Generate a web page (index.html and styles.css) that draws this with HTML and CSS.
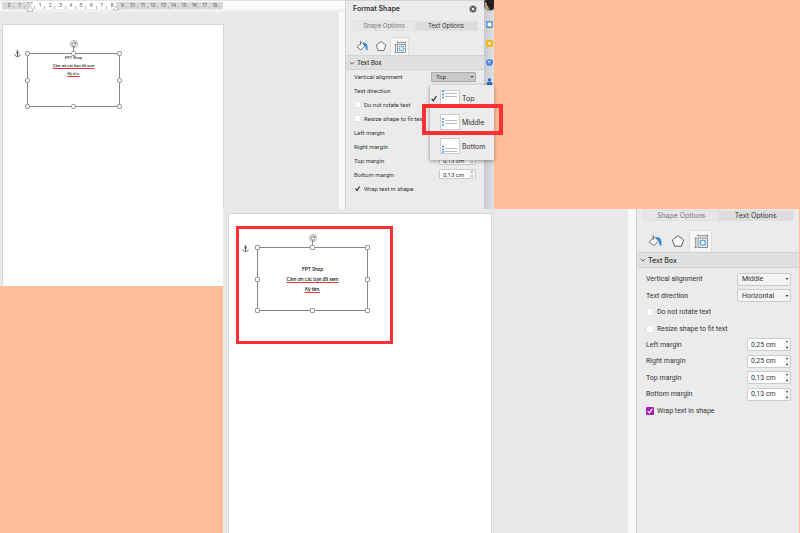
FILE: index.html
```html
<!DOCTYPE html>
<html lang="vi">
<head>
<meta charset="utf-8">
<title>Format Shape</title>
<link rel="stylesheet" href="styles.css">
</head>
<body>
<svg class="defs" aria-hidden="true">
  <symbol id="i-fill" viewBox="0 0 24 24">
    <path d="M9 2v8M2 14 11 5l7 7-8 8z" fill="#fafafa" stroke="#555" stroke-width="1.500" stroke-linejoin="round"/>
    <path d="M14 5c5 0 9 3 9 8v8c-3-1-4-4-4-8l-5-6z" fill="#2f86c9"/>
  </symbol>
  <symbol id="i-pentagon" viewBox="0 0 24 24">
    <path d="M12 3 21.500 10 18 21H6L2.500 10z" fill="#fafafa" stroke="#555" stroke-width="1.600" stroke-linejoin="round"/>
  </symbol>
  <symbol id="i-layout" viewBox="0 0 24 24">
    <path d="M7 7h16v16H7z" fill="#fff" stroke="#666" stroke-width="1.400"/>
    <path d="M3 7v16M1 7h4M1 23h4M7 3h16M7 1v4M23 1v4" fill="none" stroke="#666" stroke-width="1.400"/>
    <path d="M10 10l3 3M20 10l-3 3M10 20l3-3M20 20l-3-3" stroke="#2f8fdc" stroke-width="2"/>
    <path d="m12.500 11.500 2.500-3 2.500 3zM12.500 18.500l2.500 3 2.500-3zM11.500 12.500l-3 2.500 3 2.500zM18.500 12.500l3 2.500-3 2.500z" fill="#2f8fdc"/>
  </symbol>
  <symbol id="i-chevron" viewBox="0 0 8 8">
    <path d="m1 2.500 3 3 3-3" fill="none" stroke="#555" stroke-width="1.200"/>
  </symbol>
  <symbol id="i-steps" viewBox="0 0 6 12">
    <path d="m1.700 3.500 1.300-2 1.300 2zM1.700 8.500 3 10.500l1.300-2z" fill="#333"/>
  </symbol>
  <symbol id="i-anchor" viewBox="0 0 12 12">
    <circle cx="6" cy="2" r="1.200" fill="none" stroke="#333"/>
    <path d="M6 3v8M3.500 5h5M1 7.500C1.500 10 4 11 6 11s4.500-1 5-3.500" fill="none" stroke="#333" stroke-width="1.300"/>
  </symbol>
  <symbol id="i-rotate" viewBox="0 0 12 12">
    <circle cx="6" cy="6" r="5.300" fill="#fff" stroke="#888"/>
    <path d="M8.500 5A2.800 2.800 0 1 0 8.500 7.500M8.800 3v2.500H6.300" fill="none" stroke="#555" stroke-width="1.100"/>
  </symbol>
  <symbol id="i-check" viewBox="0 0 12 12">
    <path d="m2 6.500 3 3.500 5-8" fill="none" stroke="#222" stroke-width="2"/>
  </symbol>
</svg>

<main class="collage">
  <section class="shot shot-before">
    <div class="editor">
      <div class="ruler-bar">
        <div class="ruler">
          <span>2</span><span>1</span><span></span><span>1</span><span>2</span><span>3</span><span>4</span><span>5</span><span>6</span><span>7</span><span>8</span><span>9</span><span>10</span><span>11</span><span>12</span><span>13</span><span>14</span><span>15</span><span>16</span><span>17</span><span>18</span>
          <svg class="indent indent-left" viewBox="0 0 6 10"><path d="M.5.500h5L3 3.500zM.5 7 3 4l2.500 3v2.500h-5z" fill="#fff" stroke="#999" stroke-width=".7"/></svg>
          <svg class="indent indent-right" viewBox="0 0 6 10"><path d="M.5 8V7L3 4l2.500 3v1z" fill="#fff" stroke="#999" stroke-width=".7"/></svg>
        </div>
      </div>
      <div class="workspace">
        <div class="sheet">
          <svg class="anchor"><use href="#i-anchor"/></svg>
          <div class="textbox">
            <svg class="rotate"><use href="#i-rotate"/></svg>
            <i class="h nw"></i><i class="h n"></i><i class="h ne"></i><i class="h w"></i><i class="h e"></i><i class="h sw"></i><i class="h s"></i><i class="h se"></i>
            <p>FPT Shop</p>
            <p><u>Cảm ơn các bạn đã xem</u></p>
            <p><u>Ký tên.</u></p>
          </div>
        </div>
        <div class="scroll"></div>
      </div>
    </div>

    <aside class="panel">
      <header class="panel-title">
        <h2>Format Shape</h2>
        <button class="close" aria-label="Close"><svg viewBox="0 0 8 8"><circle cx="4" cy="4" r="3.500" fill="#666"/><path d="m2.700 2.700 2.600 2.600M5.300 2.700 2.700 5.300" stroke="#fff" stroke-width=".9"/></svg></button>
      </header>
      <div class="segments"><button>Shape Options</button><button class="on">Text Options</button></div>
      <div class="tabs">
        <button aria-label="Text fill"><svg><use href="#i-fill"/></svg></button>
        <button aria-label="Text effects"><svg><use href="#i-pentagon"/></svg></button>
        <button class="on" aria-label="Text box"><svg><use href="#i-layout"/></svg></button>
      </div>
      <h3 class="group"><svg><use href="#i-chevron"/></svg>Text Box</h3>
      <form class="fields">
        <div class="row"><label for="a-va">Vertical alignment</label><select id="a-va" class="pressed"><option>Top</option></select></div>
        <div class="row"><label for="a-td">Text direction</label><select id="a-td"><option>Horizontal</option></select></div>
        <label class="tick"><input type="checkbox">Do not rotate text</label>
        <label class="tick"><input type="checkbox">Resize shape to fit text</label>
        <div class="row"><label for="a-l">Left margin</label><span class="spin"><input id="a-l" value="0,25 cm"><svg><use href="#i-steps"/></svg></span></div>
        <div class="row"><label for="a-r">Right margin</label><span class="spin"><input id="a-r" value="0,25 cm"><svg><use href="#i-steps"/></svg></span></div>
        <div class="row"><label for="a-t">Top margin</label><span class="spin"><input id="a-t" value="0,13 cm"><svg><use href="#i-steps"/></svg></span></div>
        <div class="row"><label for="a-b">Bottom margin</label><span class="spin"><input id="a-b" value="0,13 cm"><svg><use href="#i-steps"/></svg></span></div>
        <label class="tick"><input type="checkbox" checked>Wrap text in shape</label>
      </form>
    </aside>

    <nav class="apps">
      <svg viewBox="0 0 10 12"><circle cx="6" cy="4" r="7" fill="#78a18a"/><circle cx="6" cy="4" r="6" fill="#241f20"/><path d="M0 3q3-2 3 2l3 5-4-1z" fill="#c99a82"/></svg>
      <svg viewBox="0 0 8 8"><path d="M1 1h6v6H1z" fill="#fff" stroke="#3f83e8" stroke-width="1.500"/><path d="M6.300 2.500v4" stroke="#f6bd2c" stroke-width="1.200"/><path d="M1.500 7.200H6" stroke="#3da660" stroke-width="1.200"/></svg>
      <svg viewBox="0 0 8 8"><rect width="8" height="8" x="0" y="0" rx="1" fill="#f5b918"/><circle cx="4" cy="3.800" r="1.500" fill="#fff"/></svg>
      <svg viewBox="0 0 8 8"><circle cx="4" cy="4" r="3" fill="#d7e7fd" stroke="#3179de" stroke-width="1.700"/><path d="m2.500 4 1.300 1.500L7.500 1" fill="none" stroke="#3179de" stroke-width="1.200"/></svg>
      <svg viewBox="0 0 8 8"><circle cx="4" cy="2" r="1.800" fill="#2866c8"/><path d="M1 8V6q0-2 3-2t3 2v2z" fill="#2866c8"/></svg>
    </nav>

    <div class="menu" role="menu">
      <button role="menuitem"><svg class="mark"><use href="#i-check"/></svg><svg class="thumb" viewBox="0 0 20 16"><path d="M.5.500h19v15H.5z" fill="#fff" stroke="#ccc"/><path d="M5 3.500h12M5 6.500h12" stroke="#bbb"/><path d="M2 1.500h2M2 4.500h2M2 7.500h2" stroke="#3f91e5" stroke-width="1.500"/></svg>Top</button>
      <button role="menuitem"><span class="mark"></span><svg class="thumb" viewBox="0 0 20 16"><path d="M.5.500h19v15H.5z" fill="#fff" stroke="#ccc"/><path d="M5 6.500h12M5 9.500h12" stroke="#bbb"/><path d="M2 5h2M2 8h2M2 11h2" stroke="#3f91e5" stroke-width="1.500"/></svg>Middle</button>
      <button role="menuitem"><span class="mark"></span><svg class="thumb" viewBox="0 0 20 16"><path d="M.5.500h19v15H.5z" fill="#fff" stroke="#ccc"/><path d="M5 10.500h12M5 13.500h12" stroke="#bbb"/><path d="M2 8.500h2M2 11.500h2M2 14h2" stroke="#3f91e5" stroke-width="1.500"/></svg>Bottom</button>
      <div class="callout"></div>
    </div>
  </section>

  <section class="shot shot-after">
    <div class="editor">
      <div class="workspace">
        <div class="sheet">
          <svg class="anchor"><use href="#i-anchor"/></svg>
          <div class="textbox">
            <svg class="rotate"><use href="#i-rotate"/></svg>
            <i class="h nw"></i><i class="h n"></i><i class="h ne"></i><i class="h w"></i><i class="h e"></i><i class="h sw"></i><i class="h s"></i><i class="h se"></i>
            <p>FPT Shop</p>
            <p><u>Cảm ơn các bạn đã xem</u></p>
            <p><u>Ký tên.</u></p>
          </div>
          <div class="callout"></div>
        </div>
        <div class="scroll"></div>
      </div>
    </div>

    <aside class="panel">
      <div class="segments"><button>Shape Options</button><button class="on">Text Options</button></div>
      <div class="tabs">
        <button aria-label="Text fill"><svg><use href="#i-fill"/></svg></button>
        <button aria-label="Text effects"><svg><use href="#i-pentagon"/></svg></button>
        <button class="on" aria-label="Text box"><svg><use href="#i-layout"/></svg></button>
      </div>
      <h3 class="group"><svg><use href="#i-chevron"/></svg>Text Box</h3>
      <form class="fields">
        <div class="row"><label for="b-va">Vertical alignment</label><select id="b-va"><option>Middle</option></select></div>
        <div class="row"><label for="b-td">Text direction</label><select id="b-td"><option>Horizontal</option></select></div>
        <label class="tick"><input type="checkbox">Do not rotate text</label>
        <label class="tick"><input type="checkbox">Resize shape to fit text</label>
        <div class="row"><label for="b-l">Left margin</label><span class="spin"><input id="b-l" value="0,25 cm"><svg><use href="#i-steps"/></svg></span></div>
        <div class="row"><label for="b-r">Right margin</label><span class="spin"><input id="b-r" value="0,25 cm"><svg><use href="#i-steps"/></svg></span></div>
        <div class="row"><label for="b-t">Top margin</label><span class="spin"><input id="b-t" value="0,13 cm"><svg><use href="#i-steps"/></svg></span></div>
        <div class="row"><label for="b-b">Bottom margin</label><span class="spin"><input id="b-b" value="0,13 cm"><svg><use href="#i-steps"/></svg></span></div>
        <label class="tick"><input type="checkbox" checked>Wrap text in shape</label>
      </form>
    </aside>
  </section>
</main>
</body>
</html>
```
FILE: styles.css
```css
* { box-sizing: border-box; }

body {
  margin: 0;
  background: #ffbe98;
  color: #333;
  font-family: Inter, "Liberation Sans", sans-serif;
}

button, input, select {
  margin: 0;
  padding: 0;
  border: 0;
  background: none;
  color: inherit;
  font: inherit;
}

h2, h3, p { margin: 0; }
.defs { position: absolute; width: 0; height: 0; }

/* Two overlapping windows on a peach backdrop */
.collage {
  display: grid;
  grid-template-columns: 223fr 271fr 306fr;
  grid-template-rows: 209px 77px 1fr;
  min-height: 100vh;
}

.shot { display: flex; min-width: 0; }

.shot-before {
  grid-area: 1 / 1 / 3 / 3;
  position: relative;
  --text: 6px;
  --seg-text: 6px;
  --seg: 10px;
  --icon: 12px;
  --tab: 18px;
  --group: 15px;
  --form: 125px;
  --select: 45px;
  --spin: 37px;
  --control: 10px;
  --box: 7px;
  --doc: 4px;
  --line: 8px;
}

.shot-after {
  grid-area: 2 / 2 / 4 / 4;
  z-index: 1;
  padding-right: 1px;
  --text: 7px;
  --seg-text: 7px;
  --seg: 11px;
  --icon: 14px;
  --tab: 21px;
  --group: 16px;
  --form: 148px;
  --select: 54px;
  --spin: 44px;
  --control: 13px;
  --box: 8px;
  --doc: 5px;
  --line: 10px;
}

/* Document side */
.editor { flex: 1; display: flex; flex-direction: column; min-width: 0; background: #e9e9e9; }

.ruler-bar { height: 12px; padding-top: 1px; background: #fbfbfb; border-top: 1px solid #e2e2e2; border-bottom: 3px solid #f1f1f1; }

.ruler {
  position: relative;
  display: grid;
  grid-template-columns: repeat(21, 1fr);
  width: 221px;
  height: 7px;
  margin-left: 2px;
  padding: 0 3px 0 2px;
  background: linear-gradient(90deg, #dadada 27px, #fff 27px 114px, #dadada 114px);
  color: #666;
  font-size: 5px;
  line-height: 6px;
  text-align: center;
}
.ruler span { background: linear-gradient(#bbb, #bbb) right bottom / 1px 3px no-repeat; }
.indent { position: absolute; top: 0; width: 6px; height: 10px; }
.indent-left { left: 25px; }
.indent-right { left: 111px; }

.workspace { flex: 1; display: flex; justify-content: space-between; }
.scroll { width: 6px; background: #fafafa; }

.sheet { position: relative; background: #fff; border: 1px solid #d4d4d4; border-bottom: 0; }
.shot-before .sheet { width: 222px; margin: 12px 0 0 2px; }
.shot-after .sheet { width: 264px; margin: 4px 0 0 5px; }
.shot-after .scroll { width: 8px; }

/* Selected shape on the page */
.textbox {
  position: absolute;
  display: flex;
  flex-direction: column;
  border: 1px solid #888;
  color: #000;
  font-family: Lato, "Noto Sans", sans-serif;
  font-size: var(--doc);
  font-weight: 500;
  line-height: var(--line);
  text-align: center;
}
.shot-before .textbox { left: 24px; top: 28px; width: 93px; height: 54px; }
.shot-after .textbox { left: 28px; top: 33px; width: 111px; height: 64px; justify-content: center; }
.textbox u { text-decoration: underline #e33 1px; text-underline-offset: 1px; }

.h { position: absolute; width: 5px; height: 5px; background: #fff; border: 1px solid #999; border-radius: 2px; }
.shot-after .h { border-radius: 1px; }
.nw, .n, .ne { top: -3px; }
.sw, .s, .se { bottom: -3px; }
.w, .e { top: calc(50% - 2px); }
.nw, .w, .sw { left: -3px; }
.ne, .e, .se { right: -3px; }
.n, .s { left: calc(50% - 3px); }
.n::before { content: ""; position: absolute; left: 1px; bottom: 4px; width: 1px; height: 5px; background: #888; }
.rotate { position: absolute; left: calc(50% - 4px); top: -14px; width: 8px; height: 8px; }
.anchor { position: absolute; width: 7px; height: 7px; }
.shot-before .anchor { left: 11px; top: 25px; }
.shot-after .anchor { left: 13px; top: 31px; }

.callout { position: absolute; border: 4px solid #fc3034; pointer-events: none; }
.shot-after .sheet .callout { left: 7px; top: 12px; width: 157px; height: 118px; border-width: 3px; }

/* Format pane */
.panel { display: flex; flex-direction: column; border-left: 1px solid #d0d0d0; background: #ebebeb; font-size: var(--text); }
.shot-before .panel { width: 139px; }
.shot-after .panel { width: 163px; }

.panel-title { display: flex; justify-content: space-between; align-items: center; height: 17px; padding: 0 7px 0 7px; border-top: 1px solid #d5d5d5; }
.panel-title h2 { font-size: 7px; font-weight: 600; line-height: 12px; }
.close { width: 8px; height: 8px; }
.close svg { display: block; width: 8px; height: 8px; }

.segments { display: flex; height: var(--seg); margin: 4px 6px 0 6px; border-radius: 2px; background: #e7e7e7; border: 1px solid #e0e0e0; font-size: var(--seg-text); line-height: 8px; color: #777; }
.segments button { flex: 1; }
.segments .on { background: #dcdcdc; color: #333; }
.shot-after .segments { margin-top: 1px; margin-right: 5px; }

.tabs { display: flex; margin: 6px 0 0 6px; height: var(--tab); }
.tabs button { flex: 0 0 auto; width: 19px; display: flex; align-items: center; justify-content: center; }
.tabs svg { width: var(--icon); height: var(--icon); }
.tabs .on { background: #f6f6f6; border: 1px solid #ddd; border-bottom: 0; }
.shot-after .tabs { margin-top: 9px; }
.shot-after .tabs button { width: 23px; }

.group { display: flex; align-items: center; gap: 2px; height: var(--group); margin-top: 1px; padding-left: 3px; border: solid #d4d4d4; border-width: 1px 0; background: #e0e0e0; font-size: var(--seg-text); font-weight: 500; }
.shot-before .group { margin-top: 0; }
.group svg { width: 6px; height: 6px; }

.fields { display: grid; grid-auto-rows: 1fr; height: var(--form); padding: 0 8px; font-family: Roboto, "Liberation Sans", sans-serif; }
.shot-after .fields { margin-top: 3px; padding-left: 9px; }
.row { display: flex; align-items: center; justify-content: space-between; }
.tick { display: flex; align-items: center; gap: 3px; }
.tick input { appearance: none; width: var(--box); height: var(--box); border-radius: 1px; background: #fff; border: 1px solid #e2e2e2; }
.tick input:checked { border: 0; background: url("data:image/svg+xml,%3Csvg xmlns='http://www.w3.org/2000/svg' viewBox='0 0 8 8'%3E%3Cpath d='m1.500 4.200 2 2 3-4.500' fill='none' stroke='%23222' stroke-width='1.300'/%3E%3C/svg%3E"); }
.shot-after .tick input:checked { background: #a81fb0 url("data:image/svg+xml,%3Csvg xmlns='http://www.w3.org/2000/svg' viewBox='0 0 8 8'%3E%3Cpath d='m1.700 4.200 1.600 1.600 3-4' fill='none' stroke='%23fff' stroke-width='1.200'/%3E%3C/svg%3E"); }

select {
  appearance: none;
  width: var(--select);
  height: var(--control);
  padding-left: 4px;
  border: 1px solid #ccc;
  border-radius: 1px;
  background: #f3f3f3 url("data:image/svg+xml,%3Csvg xmlns='http://www.w3.org/2000/svg' viewBox='0 0 4 4'%3E%3Cpath d='M.5 1h3L2 3z' fill='%23444'/%3E%3C/svg%3E") right 1px center / 4px 4px no-repeat;
}
select.pressed { background-color: #c9c9c9; border-color: #aaa; }

.spin { display: flex; align-items: center; width: var(--spin); height: var(--control); border: 1px solid #ccc; border-radius: 1px; background: #fff; }
.spin input { flex: 1; min-width: 0; height: 100%; padding-left: 3px; }
.spin svg { width: 6px; height: 100%; background: #f3f3f3; }

/* Google side bar */
.apps { display: flex; flex-direction: column; align-items: center; gap: 12px; width: 10px; background: linear-gradient(90deg, #c5c9cd, #dfe1e4); }
.apps svg { width: 7px; height: 7px; flex: none; }
.apps svg:first-child { width: 10px; height: 12px; margin-bottom: -3px; }

/* Alignment pop-up */
.menu { position: absolute; right: 0; top: 85px; width: 64px; height: 75px; padding: 1px 0 2px; display: grid; grid-auto-rows: 1fr; background: #ececec; box-shadow: 0 1px 4px #0006; font-size: 7px; }
.menu button { display: flex; align-items: center; gap: 2px; }
.menu .mark { width: 8px; height: 7px; }
.menu .thumb { width: 20px; height: 16px; }
.menu .callout { left: -8px; top: 19px; width: 81px; height: 31px; }
```
